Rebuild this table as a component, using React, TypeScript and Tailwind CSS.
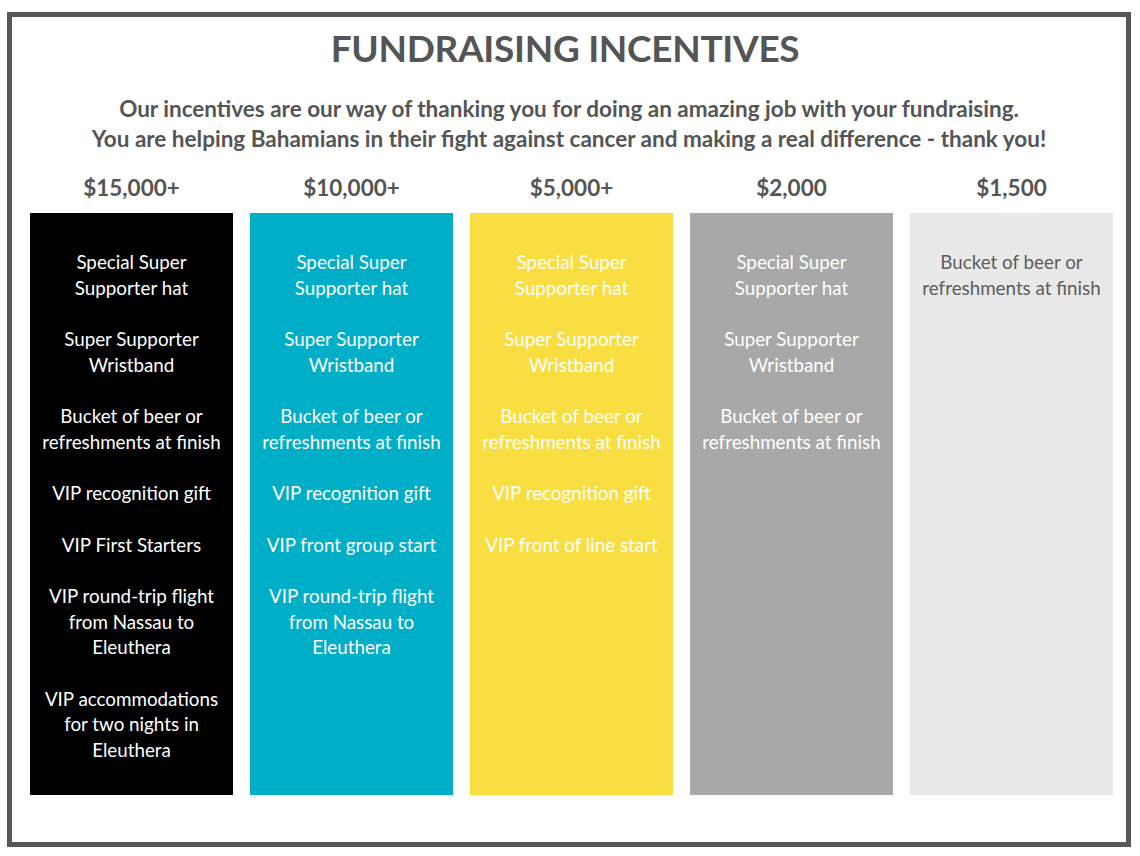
const tiers = [
  {
    price: '$15,000+',
    box: 'bg-[#000000] text-white',
    items: [
      ['Special Super', 'Supporter hat'],
      ['Super Supporter', 'Wristband'],
      ['Bucket of beer or', 'refreshments at finish'],
      ['VIP recognition gift'],
      ['VIP First Starters'],
      ['VIP round-trip flight', 'from Nassau to', 'Eleuthera'],
      ['VIP accommodations', 'for two nights in', 'Eleuthera'],
    ],
  },
  {
    price: '$10,000+',
    box: 'bg-[#00aec7] text-white',
    items: [
      ['Special Super', 'Supporter hat'],
      ['Super Supporter', 'Wristband'],
      ['Bucket of beer or', 'refreshments at finish'],
      ['VIP recognition gift'],
      ['VIP front group start'],
      ['VIP round-trip flight', 'from Nassau to', 'Eleuthera'],
    ],
  },
  {
    price: '$5,000+',
    box: 'bg-[#f9de42] text-white',
    items: [
      ['Special Super', 'Supporter hat'],
      ['Super Supporter', 'Wristband'],
      ['Bucket of beer or', 'refreshments at finish'],
      ['VIP recognition gift'],
      ['VIP front of line start'],
    ],
  },
  {
    price: '$2,000',
    box: 'bg-[#a8a8a8] text-white',
    items: [
      ['Special Super', 'Supporter hat'],
      ['Super Supporter', 'Wristband'],
      ['Bucket of beer or', 'refreshments at finish'],
    ],
  },
  {
    price: '$1,500',
    box: 'bg-[#e9e9e9] text-[#5c5c5c]',
    items: [['Bucket of beer or', 'refreshments at finish']],
  },
];

export default function App() {
  return (
    <div className="w-[1140px] h-[856px] bg-white pt-[12px] pl-[7px] font-['Lato',sans-serif]">
      <div className="w-[1124px] h-[835px] border-[5px] border-[#575757] flex flex-col">
        {/* heading */}
        <h1 className="mt-[9px] pr-[8px] text-center text-[37px] leading-[44px] font-bold text-[#555555] tracking-[-0.3px]">
          FUNDRAISING INCENTIVES
        </h1>
        <p className="mt-[24px] text-center text-[22.5px] leading-[30px] font-bold text-[#555555]">
          Our incentives are our way of thanking you for doing an amazing job with your fundraising.
          <br />
          You are helping Bahamians in their fight against cancer and making a real difference - thank you!
        </p>

        {/* tiers */}
        <div className="mt-[16px] pl-[18px] flex gap-[17px]">
          {tiers.map((t) => (
            <div key={t.price} className="w-[203px] flex flex-col">
              <div className="h-[35px] text-center text-[22.5px] leading-[35px] font-bold text-[#555555]">
                {t.price}
              </div>
              <div className={`mt-[8px] h-[582px] pt-[36px] flex flex-col gap-[26px] text-center text-[18.8px] leading-[25.5px] ${t.box}`}>
                {t.items.map((lines, i) => (
                  <div key={i}>
                    {lines.map((l) => (
                      <div key={l}>{l}</div>
                    ))}
                  </div>
                ))}
              </div>
            </div>
          ))}
        </div>
      </div>
    </div>
  );
}
